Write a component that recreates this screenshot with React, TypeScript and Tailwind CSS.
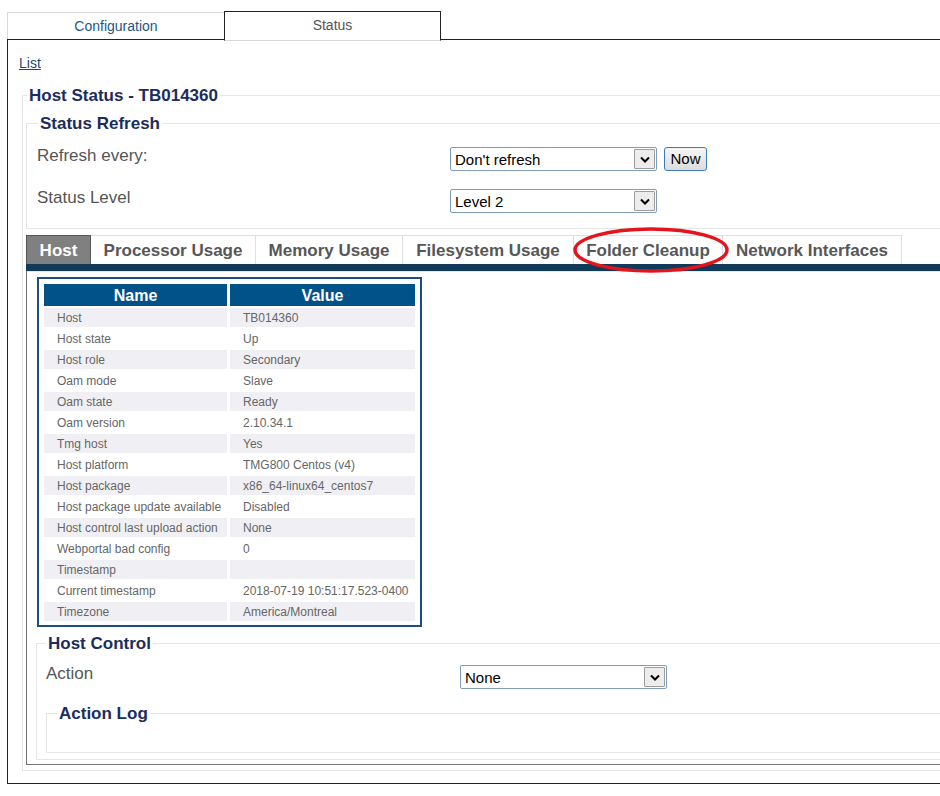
import React from "react";

const rows: [string, string][] = [
  ["Host", "TB014360"],
  ["Host state", "Up"],
  ["Host role", "Secondary"],
  ["Oam mode", "Slave"],
  ["Oam state", "Ready"],
  ["Oam version", "2.10.34.1"],
  ["Tmg host", "Yes"],
  ["Host platform", "TMG800 Centos (v4)"],
  ["Host package", "x86_64-linux64_centos7"],
  ["Host package update available", "Disabled"],
  ["Host control last upload action", "None"],
  ["Webportal bad config", "0"],
  ["Timestamp", ""],
  ["Current timestamp", "2018-07-19 10:51:17.523-0400"],
  ["Timezone", "America/Montreal"],
];

function FakeSelect({ value }: { value: string }) {
  return (
    <div className="w-[207px] h-[24px] shrink-0 border border-[#7f9db9] rounded-[2px] bg-white flex items-center justify-between pl-[4px] pr-[1px]">
      <span className="text-[15px] leading-[17px] text-black">{value}</span>
      <div className="w-[21px] h-[20px] bg-[#ededed] border border-[#9c9c9c] rounded-[1px] flex items-center justify-center">
        <svg width="10" height="7" viewBox="0 0 10 7">
          <path d="M1 1.5 L5 5.5 L9 1.5" fill="none" stroke="#000" strokeWidth="2" />
        </svg>
      </div>
    </div>
  );
}

const tabs: { label: string; w: string; active?: boolean }[] = [
  { label: "Host", w: "w-[65px]", active: true },
  { label: "Processor Usage", w: "w-[165px]" },
  { label: "Memory Usage", w: "w-[147px]" },
  { label: "Filesystem Usage", w: "w-[171px]" },
  { label: "Folder Cleanup", w: "w-[149px]" },
  { label: "Network Interfaces", w: "w-[179px]" },
];

const legendCls =
  "px-[2px] pt-[2px] text-[17px] font-bold leading-[18px] text-[#1b2d5b]";

export default function App() {
  return (
    <div className="relative w-[940px] h-[796px] overflow-hidden bg-white font-['Liberation_Sans',Arial,sans-serif]">
      {/* top tabs */}
      <div className="flex items-end pl-[7px] h-[39px]">
        <div className="w-[217px] h-[27px] border-t border-l border-[#d9d9d9] flex items-center justify-center text-[14px] text-[#1f5687]">
          Configuration
        </div>
        <div className="relative z-10 w-[217px] h-[30px] mb-[-2px] bg-white border border-[#222] border-b-[#d9d9d9] flex items-center justify-center text-[14px] text-[#555] pb-[2px]">
          Status
        </div>
      </div>

      {/* content box */}
      <div className="ml-[7px] w-[1100px] border border-r-0 border-[#222] pt-[15px] pb-[12px]">
        <div className="pl-[11px] text-[14px] leading-[16px]">
          <span className="underline text-[#1e4a77]">List</span>
        </div>

        <fieldset className="ml-[14px] mt-[14px] border border-r-0 border-[#e6e6e6] pb-[5px]">
          <legend className={`ml-[4px] ${legendCls}`}>Host Status - TB014360</legend>

          <fieldset className="ml-[3px] mt-[8px] border border-r-0 border-[#e6e6e6] pb-[15px]">
            <legend className={`ml-[11px] ${legendCls}`}>Status Refresh</legend>
            <div className="mt-[14px] pl-[10px] flex items-start">
              <div className="w-[413px] text-[17px] leading-[18px] text-[#555]">Refresh every:</div>
              <FakeSelect value="Don't refresh" />
              <div className="ml-[7px] w-[43px] h-[24px] border border-[#3c7cb2] rounded-[3px] bg-gradient-to-b from-[#f6f6f6] to-[#dcdcdc] flex items-center justify-center text-[15px] text-black">
                Now
              </div>
            </div>
            <div className="mt-[18px] pl-[10px] flex items-start">
              <div className="w-[413px] text-[17px] leading-[18px] text-[#555]">Status Level</div>
              <FakeSelect value="Level 2" />
            </div>
          </fieldset>

          {/* inner tab container */}
          <div className="ml-[3px] mt-[6px] border-l border-b border-[#737373] pb-[4px]">
            <div className="flex h-[29px]">
              {tabs.map((t) =>
                t.active ? (
                  <div
                    key={t.label}
                    className={`${t.w} ml-[-1px] pt-[2px] border border-b-0 border-[#555] bg-[#808080] flex items-center justify-center text-[17px] font-bold text-white`}
                  >
                    {t.label}
                  </div>
                ) : (
                  <div
                    key={t.label}
                    className={`${t.w} pt-[2px] border-t border-r border-[#dcdfe4] bg-white flex items-center justify-center text-[17px] font-bold text-[#575757]`}
                  >
                    {t.label}
                  </div>
                )
              )}
            </div>
            <div className="ml-[-1px] h-[7px] bg-[#113a5a]" />
            <div className="h-[1px] bg-[#e8e8e8]" />

            {/* table box */}
            <div className="ml-[10px] mt-[5px] w-[385px] border-2 border-[#1c4f7e] pt-[5px] pl-[5px] pr-[4px] pb-[4px]">
              <div className="grid grid-cols-[183px_185px] gap-x-[3px] gap-y-[2px]">
                <div className="h-[22px] pt-[2px] bg-[#02528a] flex items-center justify-center text-[16px] font-bold text-white">
                  Name
                </div>
                <div className="h-[22px] pt-[2px] bg-[#02528a] flex items-center justify-center text-[16px] font-bold text-white">
                  Value
                </div>
                {rows.map(([n, v], i) => (
                  <React.Fragment key={n}>
                    <div
                      className={`h-[19px] pl-[13px] flex items-center text-[12px] text-[#666] whitespace-nowrap ${
                        i % 2 === 0 ? "bg-[#f0f0f4]" : "bg-white"
                      }`}
                    >
                      {n}
                    </div>
                    <div
                      className={`h-[19px] pl-[13px] flex items-center text-[12px] text-[#666] whitespace-nowrap ${
                        i % 2 === 0 ? "bg-[#f0f0f4]" : "bg-white"
                      }`}
                    >
                      {v}
                    </div>
                  </React.Fragment>
                ))}
              </div>
            </div>

            {/* Host Control */}
            <fieldset className="ml-[9px] mt-[6px] border border-r-0 border-[#e6e6e6] pb-[6px]">
              <legend className={`ml-[9px] ${legendCls}`}>Host Control</legend>
              <div className="mt-[12px] pl-[9px] flex items-start">
                <div className="w-[414px] text-[17px] leading-[18px] text-[#555]">Action</div>
                <FakeSelect value="None" />
              </div>
              <fieldset className="ml-[9px] mt-[14px] border border-r-0 border-[#e6e6e6]">
                <legend className={`ml-[10px] ${legendCls}`}>Action Log</legend>
                <div className="h-[29px]" />
              </fieldset>
            </fieldset>
          </div>
        </fieldset>
      </div>

      {/* red annotation ellipse */}
      <svg
        className="absolute left-[572px] top-[226px] pointer-events-none"
        width="160"
        height="48"
        viewBox="0 0 160 48"
      >
        <ellipse cx="79" cy="24" rx="76" ry="21" fill="none" stroke="#e3141c" strokeWidth="3.5" />
      </svg>
    </div>
  );
}
